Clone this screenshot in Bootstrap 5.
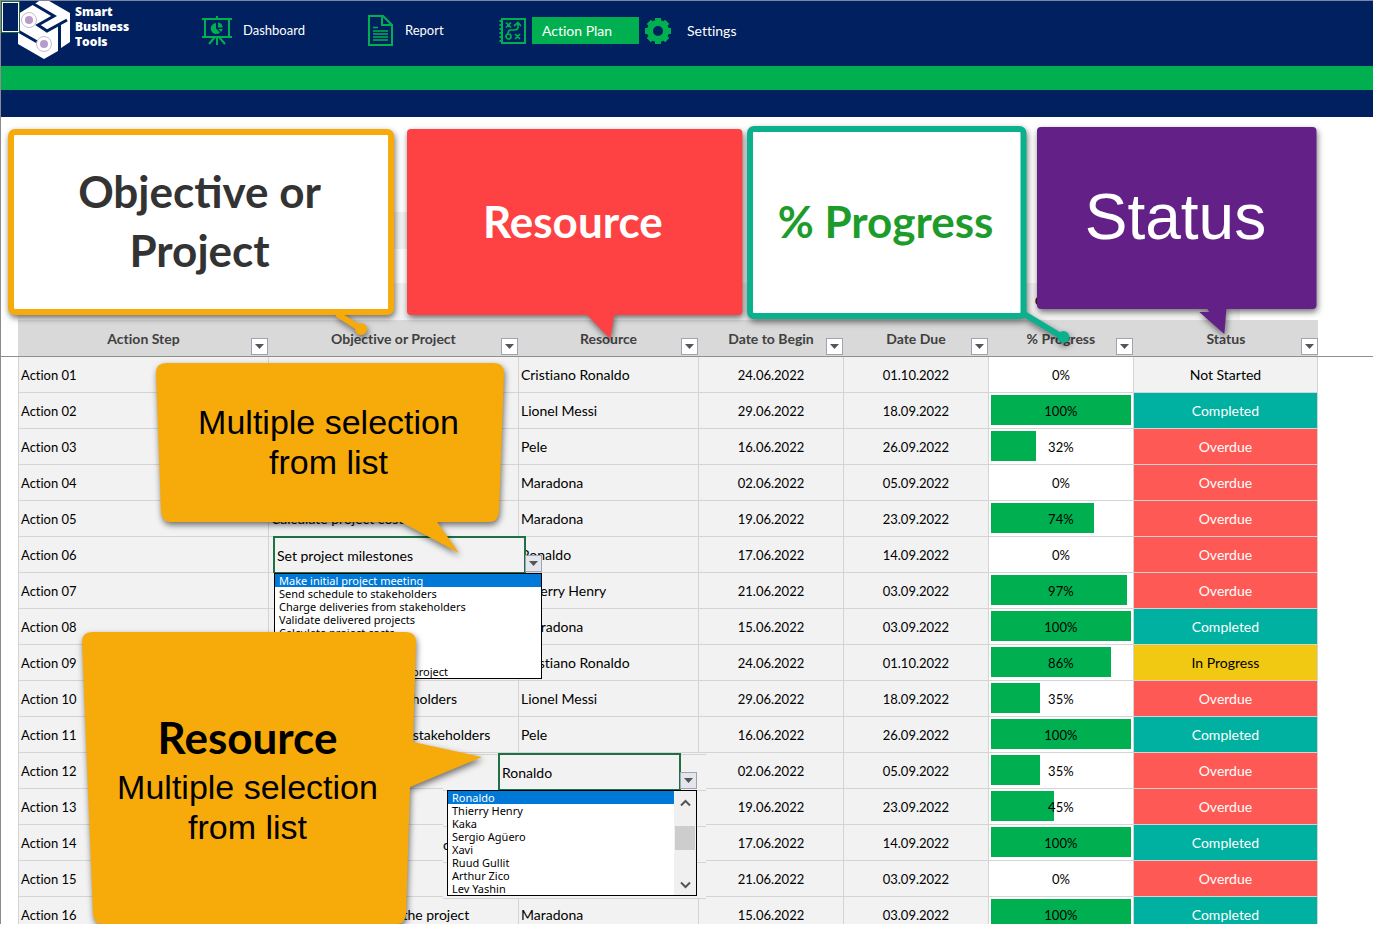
<!DOCTYPE html>
<html lang="en">
<head>
<meta charset="utf-8">
<meta name="viewport" content="width=device-width, initial-scale=1">
<title>Action Plan</title>
<link href="https://cdn.jsdelivr.net/npm/bootstrap@5.3.0/dist/css/bootstrap.min.css" rel="stylesheet">
<style>
  :root { --navy:#002060; --green:#00b050; --amber:#f7ab0a; --line:#d4d4d4; --cell:#f2f2f2; }
  body { font-family:Lato,"Noto Sans",sans-serif; font-size:14px; line-height:20px; color:#000; background:#fff; font-variant-ligatures:none; }
  .app { padding-bottom:2px; }
  .app-frame { border-left:1px solid #8c8c8c; min-height:0; }

  /* top navigation */
  .topbar { background:var(--navy); height:66px; border-top:1px solid #7b86a5; }
  .brand { width:201px; height:64px; color:#fff; font:800 12px/15px "Open Sans",sans-serif; text-decoration:none; }
  .brand svg { width:54px; height:60px; margin-left:16px; }
  .brand span { padding:3px 0 0 4px; }
  .active-cell { left:1px; top:1px; width:17px; height:30px; border:1px solid #fff; outline:1px solid #1c6b40; background:var(--navy); }
  .topnav { padding-top:14px; }
  .topnav .nav-link { color:#fff; padding:0; height:27px; line-height:27px; font-size:13px; }
  .topnav svg { color:var(--green); flex:none; }
  .topnav li { gap:11px; }
  .w-dash { width:165px; } .w-report { width:132px; } .w-plan { width:145px; }
  .topnav .w-plan { gap:6px; }
  .topnav .active { background:var(--green); width:107px; padding-left:10px; font-size:14px; }
  .topnav .w-set { font-size:14px; }
  .band-green { height:24px; background:var(--green); }
  .band-navy { height:27px; background:var(--navy); }

  /* sheet */
  .board { margin:0 55px 0 17px; }
  .form-area { height:203px; padding-top:95px; }
  .strip { height:37px; background:var(--cell); }
  .strip-a { width:70%; max-width:520px; }
  .strip-b { width:94%; margin-top:34px; }
  .strip-b span { padding-left:83.2%; line-height:36px; }
  .freeze { height:1px; left:-18px; right:-55px; top:239px; background:#8f8f8f; }
  .plan { table-layout:fixed; width:100%; border-collapse:separate; border-spacing:0; }
  .plan th { height:37px; padding:0 0 0 1px; background:#d9d9d9; color:#404040; position:relative; text-align:center; font-weight:700; }
  .plan td { height:36px; padding:0 2px; background:var(--cell); border-left:1px solid var(--line); border-bottom:1px solid var(--line); white-space:nowrap; }
  .plan td:nth-child(n+4) { text-align:center; }
  .plan td:nth-child(1), .plan td:nth-child(4), .plan td:nth-child(5), .plan td:nth-child(6) { font-size:13px; }
  .plan td:last-child { border-right:1px solid var(--line); }
  .plan td.pct { background:#fff; }
  .plan td.completed { background:#00b0a0; color:#fff; }
  .plan td.overdue { background:#fe5955; color:#fff; }
  .plan td.progressing { background:#f1c812; }
  .filter { width:17px; height:17px; padding:0; border:1px solid #a0a4b0; background:#fff; line-height:0; }
  .plan .filter { right:0; bottom:2px; }
  .meter { display:grid; align-items:center; height:30px; margin-top:-1px; }
  .meter > * { grid-area:1/1; }
  .meter i { height:30px; background:var(--green); }
  .meter span { padding-top:1px; }

  /* open pick lists */
  .pick select { appearance:none; border:2px solid #1e7145; border-bottom-width:1px; background:var(--cell); height:37px; padding:1px 2px 0; width:100%; color:#000; border-radius:0; font-variant-ligatures:none; }
  .pick .filter { background:#e4e6ee; }
  .options { border:1px solid #000; background:#fff; font:11px/13px "Noto Sans",sans-serif; }
  .options li { padding-left:4px; white-space:nowrap; height:13px; }
  .options .chosen { background:#0078d7; color:#fff; }
  .pick-task { left:255px; top:419px; width:269px; }
  .pick-task .head { width:253px; }
  .pick-task .options { margin-left:1px; }
  .pick-task .filter, .pick-name .filter { right:0; top:19px; }
  .pick-name { left:425px; top:636px; width:263px; height:146px; padding:0 9px 0 4px; background:repeating-linear-gradient(var(--cell) 0 1px,var(--line) 1px 2px,var(--cell) 2px 36px); }
  .pick-name .head { width:183px; margin-left:51px; }
  .pick-name .filter { right:9px; }
  .scroller { width:22px; background:#f0f0f0; padding:8px 0 6px; }
  .scroller b { width:20px; height:24px; background:#cdcdcd; margin-bottom:12px; }
  .stray { left:0; top:82px; }

  /* callouts */
  .callout { position:absolute; display:flex; flex-direction:column; align-items:center; justify-content:center; text-align:center; padding:0 3px 2px 0; font:34px/40px "Liberation Sans",sans-serif; }
  .callout > svg { position:absolute; inset:0; width:100%; height:100%; overflow:visible; filter:drop-shadow(1px 3px 3px rgba(0,0,0,.55)); }
  .callout > div { position:relative; }
  .callout .title { font:700 44px/59px Lato,sans-serif; }
  .c-objective { left:-10px; top:12px; width:29.7%; height:186px; color:#333; }
  .c-resource { left:29.9%; top:12px; width:25.8%; height:186px; color:#fff; }
  .c-progress { left:56.1%; top:9px; width:21.5%; height:193px; color:#1d9c2c; }
  .c-status { left:78.4%; top:10px; width:21.5%; height:182px; color:#fff; font-size:64px; line-height:64px; }
  .c-pick { left:138px; top:246px; width:348px; height:159px; }
  .c-names { left:64px; top:515px; width:334px; height:292px; }
</style>
</head>
<body>
<div class="app vh-100 d-flex flex-column overflow-hidden">
 <div class="app-frame flex-fill d-flex flex-column overflow-hidden">
  <header>
    <nav class="topbar d-flex align-items-start position-relative">
      <a class="brand d-flex" href="#">
        <svg viewBox="0 0 54 60">
          <path fill="#fff" d="M27 -3 L53 12 V41 L44 47 V24 L41 26 V50 L27 58 L1 43 V13 Z"/>
          <path fill="none" stroke="#002060" stroke-width="3" d="M15 2 L37 15 L21 24 L30 30 L50 19M30 30 L43 23M1 30 L22 42M42.500 24 V52"/>
          <circle cx="12" cy="19" r="7.500" fill="#fff" stroke="#c9b9d2"/><circle cx="12" cy="19" r="4" fill="#b79ccb"/>
          <circle cx="27" cy="43" r="7.500" fill="#fff" stroke="#c9b9d2"/><circle cx="27" cy="43" r="4" fill="#b79ccb"/>
        </svg>
        <span>Smart<br>Business<br>Tools</span>
      </a>
      <div class="active-cell position-absolute"></div>
      <ul class="topnav nav flex-nowrap align-self-start">
        <li class="w-dash d-flex align-items-center">
          <svg width="30" height="30" viewBox="0 0 30 30" fill="none" stroke="currentColor" stroke-width="2"><path d="M0 3H30M15 0V3M3 3V20M27 3V20M0 21H30M15 21V29M13 21L7 28M17 21L23 28"/><path fill="currentColor" stroke="none" d="M14 7V12.500L18 16.500A5.500 5.500 0 1 1 14 7ZM16 6.500A5 5 0 0 1 20.500 11.500H16ZM16.500 13H20.500A5 5 0 0 1 19 16Z"/></svg>
          <a class="nav-link" href="#">Dashboard</a></li>
        <li class="w-report d-flex align-items-center">
          <svg width="27" height="31" viewBox="0 0 27 31" fill="none" stroke="currentColor" stroke-width="2"><path d="M2 1H16L25 10V30H2ZM15 1V10H25" /><path stroke-width="1.300" d="M6 12.500H11M6 16H21M6 19H21M6 22H21M6 25H21"/></svg>
          <a class="nav-link" href="#">Report</a></li>
        <li class="w-plan d-flex align-items-center">
          <svg width="27" height="27" viewBox="0 0 27 27" fill="none" stroke="currentColor" stroke-width="2"><path d="M3 2H26V26H3Z"/><path stroke-dasharray="2 2" d="M1.500 3V26"/><path stroke-width="1.700" d="M7 5.500L12 10.500M12 5.500L7 10.500M16 17L21 22M21 17L16 22M15 9L19 5.500L22 9M19 6V10Q19 13 15 13H12Q9 13 9 17"/><circle cx="9.500" cy="19.500" r="2.500" stroke-width="1.700"/></svg>
          <a class="nav-link active" href="#">Action Plan</a></li>
        <li class="d-flex align-items-center">
          <svg width="28" height="28" viewBox="0 0 28 28" fill="none" stroke="currentColor" stroke-width="6"><circle cx="14" cy="14" r="8"/><path d="M14 1V5M14 23V27M1 14H5M23 14H27M4.800 4.800L7.500 7.500M20.500 20.500L23.200 23.200M4.800 23.200L7.500 20.500M20.500 7.500L23.200 4.800"/></svg>
          <a class="nav-link w-set ps-1" href="#">Settings</a></li>
      </ul>
    </nav>
    <div class="band-green"></div>
    <div class="band-navy"></div>
  </header>

  <main class="flex-fill overflow-hidden">
    <div class="board position-relative">
      <div class="form-area">
        <div class="strip strip-a"></div>
        <div class="strip strip-b"><span>C</span></div>
      </div>
      <table class="plan">
        <colgroup><col style="width:19.23%"><col style="width:19.23%"><col style="width:13.85%"><col style="width:11.15%"><col style="width:11.15%"><col style="width:11.15%"><col></colgroup>
        <thead><tr id="heads"></tr></thead>
        <tbody id="rows"></tbody>
      </table>
      <div class="freeze position-absolute"></div>

      <div class="pick pick-task position-absolute">
        <div class="head"><select aria-label="Objective or Project"><option>Set project milestones</option></select></div>
        <button class="filter position-absolute" type="button" aria-label="Open list"><svg width="9" height="5"><path d="M0 0H9L4.500 5Z" fill="#555"/></svg></button>
        <ul class="options list-unstyled mb-0">
          <li class="chosen">Make initial project meeting</li><li>Send schedule to stakeholders</li><li>Charge deliveries from stakeholders</li><li>Validate delivered projects</li><li>Calculate project costs</li><li></li><li></li><li>Prepare summary for the project</li>
        </ul>
      </div>

      <div class="pick pick-name position-absolute">
        <span class="stray position-absolute">c</span>
        <div class="head"><select aria-label="Resource"><option>Ronaldo</option></select></div>
        <button class="filter position-absolute" type="button" aria-label="Open list"><svg width="9" height="5"><path d="M0 0H9L4.500 5Z" fill="#555"/></svg></button>
        <div class="options position-relative d-flex">
          <ul class="list-unstyled m-0 flex-fill">
            <li class="chosen">Ronaldo</li><li>Thierry Henry</li><li>Kaka</li><li>Sergio Agüero</li><li>Xavi</li><li>Ruud Gullit</li><li>Arthur Zico</li><li>Lev Yashin</li>
          </ul>
          <div class="scroller d-flex flex-column align-items-center justify-content-between">
            <svg width="11" height="8"><path d="M1 6.500L5.500 2L10 6.500" fill="none" stroke="#555" stroke-width="2"/></svg>
            <b></b>
            <svg width="11" height="8"><path d="M1 1.500L5.500 6L10 1.500" fill="none" stroke="#555" stroke-width="2"/></svg>
          </div>
        </div>
      </div>

      <div class="callout c-objective">
        <svg viewBox="0 0 386 186" preserveAspectRatio="none"><path d="M329 185L353 200" stroke="#f7ab0a" stroke-width="6"/><circle cx="353" cy="200" r="6" fill="#f7ab0a"/><rect x="3" y="3" width="380" height="180" rx="4" fill="#fff" stroke="#f7ab0a" stroke-width="6"/></svg>
        <div class="title">Objective or<br>Project</div>
      </div>
      <div class="callout c-resource">
        <svg viewBox="0 0 335 186" preserveAspectRatio="none"><path fill="#fe4244" d="M4 0H331Q335 0 335 4V182Q335 186 331 186H207L203 210L180 186H4Q0 186 0 182V4Q0 0 4 0Z"/></svg>
        <div class="title">Resource</div>
      </div>
      <div class="callout c-progress">
        <svg viewBox="0 0 280 193" preserveAspectRatio="none"><path d="M276 187L316 211" stroke="#0bb08d" stroke-width="6"/><circle cx="317" cy="211" r="6" fill="#0bb08d"/><rect x="3" y="3" width="274" height="187" rx="4" fill="#fff" stroke="#0bb08d" stroke-width="6"/></svg>
        <div class="title">% Progress</div>
      </div>
      <div class="callout c-status">
        <svg viewBox="0 0 279 182" preserveAspectRatio="none"><path fill="#632187" d="M4 0H275Q279 0 279 4V178Q279 182 275 182H189L187 207L162 185H172L170 182H4Q0 182 0 178V4Q0 0 4 0Z"/></svg>
        <div>Status</div>
      </div>
      <div class="callout c-pick">
        <svg viewBox="0 0 348 159" preserveAspectRatio="none"><path fill="#f7ab0a" d="M10 0H338Q348 0 348 10L343 149Q342 159 333 159H281L303 190L245 159H15Q6 159 5 149L0 10Q0 0 10 0Z"/></svg>
        <div>Multiple selection<br>from list</div>
      </div>
      <div class="callout c-names">
        <svg viewBox="0 0 334 292" preserveAspectRatio="none"><path fill="#f7ab0a" d="M10 0H324Q334 0 334 10L331 110L400 125L328 155L324 282Q323 292 314 292H21Q12 292 11 282L0 10Q0 0 10 0Z"/></svg>
        <div class="title">Resource</div>
        <div>Multiple selection<br>from list</div>
      </div>
    </div>
  </main>
 </div>
</div>
<script src="https://cdn.jsdelivr.net/npm/bootstrap@5.3.0/dist/js/bootstrap.bundle.min.js"></script>
<script>
  const arrow = '<svg width="9" height="5"><path d="M0 0H9L4.500 5Z" fill="#555"/></svg>';
  document.getElementById('heads').innerHTML =
    ['Action Step', 'Objective or Project', 'Resource', 'Date to Begin', 'Date Due', '% Progress', 'Status']
      .map(h => `<th scope="col">${h}<button type="button" class="filter position-absolute" aria-label="Filter">${arrow}</button></th>`).join('');

  const tone = { 'Completed': 'completed', 'Overdue': 'overdue', 'In Progress': 'progressing', 'Not Started': '' };
  // task, resource, begin, due, progress, status
  const plan = [
    ['', 'Cristiano Ronaldo', '24.06.2022', '01.10.2022', 0, 'Not Started'],
    ['', 'Lionel Messi', '29.06.2022', '18.09.2022', 100, 'Completed'],
    ['', 'Pele', '16.06.2022', '26.09.2022', 32, 'Overdue'],
    ['', 'Maradona', '02.06.2022', '05.09.2022', 0, 'Overdue'],
    ['Calculate project costs', 'Maradona', '19.06.2022', '23.09.2022', 74, 'Overdue'],
    ['', 'Ronaldo', '17.06.2022', '14.09.2022', 0, 'Overdue'],
    ['', 'Thierry Henry', '21.06.2022', '03.09.2022', 97, 'Overdue'],
    ['', 'Maradona', '15.06.2022', '03.09.2022', 100, 'Completed'],
    ['', 'Cristiano Ronaldo', '24.06.2022', '01.10.2022', 86, 'In Progress'],
    ['Send schedule to stakeholders', 'Lionel Messi', '29.06.2022', '18.09.2022', 35, 'Overdue'],
    ['Charge deliveries from stakeholders', 'Pele', '16.06.2022', '26.09.2022', 100, 'Completed'],
    ['', '', '02.06.2022', '05.09.2022', 35, 'Overdue'],
    ['', '', '19.06.2022', '23.09.2022', 45, 'Overdue'],
    ['Set project milestones', '', '17.06.2022', '14.09.2022', 100, 'Completed'],
    ['', '', '21.06.2022', '03.09.2022', 0, 'Overdue'],
    ['Prepare summary for the project', 'Maradona', '15.06.2022', '03.09.2022', 100, 'Completed']
  ];
  document.getElementById('rows').innerHTML = plan.map(([task, who, from, to, pct, state], i) => `
    <tr><td>Action ${String(i + 1).padStart(2, '0')}</td><td>${task}</td><td>${who}</td><td>${from}</td><td>${to}</td>
    <td class="pct"><div class="meter"><i style="width:${pct}%"></i><span>${pct}%</span></div></td>
    <td class="${tone[state]}">${state}</td></tr>`).join('');
</script>
</body>
</html>
